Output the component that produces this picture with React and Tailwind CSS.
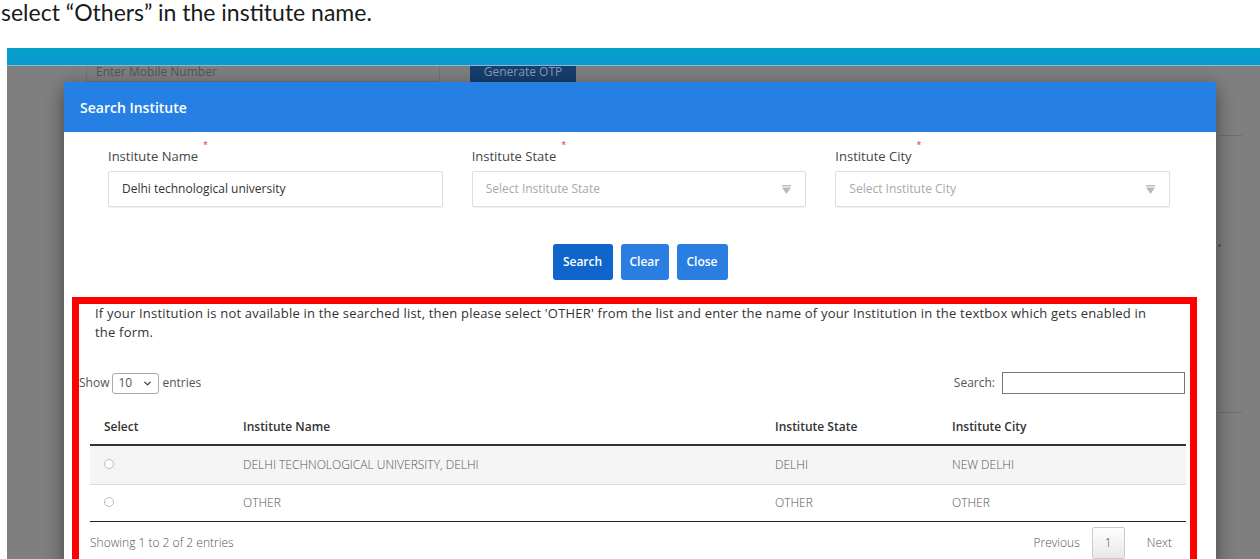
import { ChevronDown } from "lucide-react";

const rows = [
  { name: "DELHI TECHNOLOGICAL UNIVERSITY, DELHI", state: "DELHI", city: "NEW DELHI" },
  { name: "OTHER", state: "OTHER", city: "OTHER" },
];

function Caret() {
  return (
    <svg width="9" height="9" viewBox="0 0 9 9" className="shrink-0">
      <rect x="0" y="0" width="9" height="1.4" fill="#b9b9b9" />
      <path d="M0 2.4 H9 L4.5 9 Z" fill="#b9b9b9" />
    </svg>
  );
}

function FieldLabel({ children }) {
  return (
    <label className="mb-[7px] block text-[13px] leading-[16px] text-[#454545]">
      <span className="relative">
        {children}
        <span className="absolute -right-[10px] -top-[7px] text-[9px] leading-none text-[#e0303a]">*</span>
      </span>
    </label>
  );
}

function SelectBox({ placeholder }) {
  return (
    <div className="flex h-[36px] items-center justify-between rounded-[2px] border border-[#dedede] bg-white pl-[13px] pr-[14px] text-[12px] text-[#a9a9a9] shadow-[0_1px_1px_rgba(0,0,0,0.06)]">
      <span>{placeholder}</span>
      <Caret />
    </div>
  );
}

function Radio() {
  return <span className="inline-block h-[10px] w-[10px] rounded-full border border-[#bdbdbd] bg-white" />;
}

export default function App() {
  return (
    <div className="h-[559px] w-[1260px] overflow-hidden bg-white font-['Open_Sans',sans-serif]">
      <div className="h-[48px] pl-[1px] font-['Lato',sans-serif] text-[23px] leading-[24px] text-[#1a1a1a]">
        select “Others” in the institute name.
      </div>

      <div className="ml-[7px]">
        <div className="h-[17px] bg-gradient-to-b from-[#05a0c9] to-[#0c99cf]" />
        <div className="h-px bg-[#8ab6d8]" />

        <div className="relative h-[493px] overflow-hidden bg-[#7f7f7f]">
          {/* page behind the backdrop, its top edge runs under the header bar */}
          <div className="-mt-[4px] flex items-start pl-[79px]">
            <div className="flex h-[20px] w-[354px] items-center border-x border-b border-[#737373] pl-[9px] text-[12px] leading-none text-[#555]">
              Enter Mobile Number
            </div>
            <div className="ml-[30px] flex h-[20px] w-[106px] items-center justify-center bg-[#173e6d] text-[12px] leading-none text-[#8b9bb3]">
              Generate OTP
            </div>
          </div>
          <div className="absolute left-[1211px] top-[69px] h-px w-[24px] bg-[#6f6f6f]" />
          <div className="absolute left-[1211px] top-[178px] h-[3px] w-[3px] rounded-full bg-[#555]" />
          <div className="absolute left-[1211px] top-[346px] h-px w-[24px] bg-[#6f6f6f]" />

          {/* Search Institute modal */}
          <div className="absolute left-[57px] top-[16px] w-[1152px] bg-white shadow-[0_5px_18px_rgba(0,0,0,0.45)]">
            <div className="flex h-[50px] items-center bg-[#2680e4] pl-[16px] text-[14px] font-semibold text-white">
              Search Institute
            </div>

            <div className="pt-[16px]">
              <div className="ml-[44px] mr-[46px] grid grid-cols-3 gap-x-[29px]">
                <div>
                  <FieldLabel>Institute Name</FieldLabel>
                  <div className="flex h-[36px] items-center rounded-[2px] border border-[#dedede] bg-white pl-[13px] text-[12px] text-[#333] shadow-[0_1px_1px_rgba(0,0,0,0.06)]">
                    Delhi technological university
                  </div>
                </div>
                <div>
                  <FieldLabel>Institute State</FieldLabel>
                  <SelectBox placeholder="Select Institute State" />
                </div>
                <div>
                  <FieldLabel>Institute City</FieldLabel>
                  <SelectBox placeholder="Select Institute City" />
                </div>
              </div>

              <div className="mt-[37px] flex justify-center gap-[8px] text-[12px] font-semibold text-white">
                <button className="h-[36px] w-[60px] rounded-[3px] bg-[#0f65cb]">Search</button>
                <button className="h-[36px] w-[48px] rounded-[3px] bg-[#2a7ee2]">Clear</button>
                <button className="h-[36px] w-[51px] rounded-[3px] bg-[#2a7ee2]">Close</button>
              </div>

              <div className="ml-[8px] mr-[19px] mt-[17px] border-[7px] border-b-0 border-[#ff0000] pb-[40px]">
                <p className="pl-[16px] pr-[8px] text-[13px] font-medium leading-[19px] tracking-[0.2px] text-[#333]">
                  If your Institution is not available in the searched list, then please select 'OTHER' from the list and
                  enter the name of your Institution in the textbox which gets enabled in
                  <br />
                  the form.
                </p>

                <div className="mt-[30px] flex items-center justify-between pr-[5px] text-[12px] text-[#555]">
                  <div className="flex items-center">
                    Show
                    <span className="mx-[3px] flex h-[21px] w-[47px] items-center justify-between rounded-[3px] border border-[#aaa] px-[5px] text-[#555]">
                      10
                      <ChevronDown size={11} strokeWidth={3} color="#444" />
                    </span>
                    entries
                  </div>
                  <div className="flex items-center">
                    Search:
                    <span className="ml-[7px] h-[22px] w-[183px] border border-[#777] bg-white" />
                  </div>
                </div>

                <table className="ml-[11px] mt-[15px] w-[1096px] border-collapse text-left text-[12px]">
                  <thead>
                    <tr className="border-b-2 border-[#333] text-[#333]">
                      <th className="w-[139px] pb-[8px] pl-[14px] pt-[9px] font-semibold leading-[18px]">Select</th>
                      <th className="w-[532px] pb-[8px] pl-[14px] pt-[9px] font-semibold leading-[18px]">Institute Name</th>
                      <th className="w-[177px] pb-[8px] pl-[14px] pt-[9px] font-semibold leading-[18px]">Institute State</th>
                      <th className="pb-[8px] pl-[14px] pt-[9px] font-semibold leading-[18px]">Institute City</th>
                    </tr>
                  </thead>
                  <tbody className="font-light text-[#555]">
                    {rows.map((row, index) => (
                      <tr
                        key={row.name}
                        className={
                          index === 0
                            ? "h-[39px] border-b border-[#dcdcdc] bg-[#f5f5f5]"
                            : "h-[37px] border-b border-[#222] bg-white"
                        }
                      >
                        <td className="pl-[14px] align-middle">
                          <Radio />
                        </td>
                        <td className="pl-[14px]">{row.name}</td>
                        <td className="pl-[14px]">{row.state}</td>
                        <td className="pl-[14px]">{row.city}</td>
                      </tr>
                    ))}
                  </tbody>
                </table>

                <div className="ml-[11px] mr-[4px] mt-[5px] flex items-center justify-between text-[12px] font-light text-[#555]">
                  <span>Showing 1 to 2 of 2 entries</span>
                  <div className="flex items-center">
                    <span className="pl-[14px] pr-[12px]">Previous</span>
                    <span className="flex h-[32px] w-[33px] items-center justify-center rounded-[2px] border border-[#ccc] bg-gradient-to-b from-white to-[#e8e8e8]">
                      1
                    </span>
                    <span className="pl-[22px] pr-[14px]">Next</span>
                  </div>
                </div>
              </div>
            </div>
          </div>
        </div>
      </div>
    </div>
  );
}
